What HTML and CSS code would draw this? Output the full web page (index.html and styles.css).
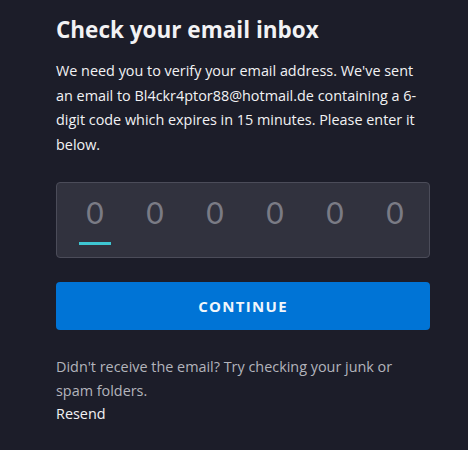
FILE: index.html
```html
<!DOCTYPE html>
<html lang="en">
<head>
    <meta charset="UTF-8">
    <meta name="viewport" content="width=device-width, initial-scale=1.0">
    <title>Check your email inbox</title>
    <link rel="stylesheet" href="styles.css">
</head>
<body>
<div id="container">
    <h1>Check your email inbox</h1>
    <p class="info">We need you to verify your email address. We've sent an email to Bl4ckr4ptor88@hotmail.de containing a 6-digit code which expires in 15 minutes. Please enter it below.</p>

    <div class="code">
        <div class="slot active"><span>0</span></div>
        <div class="slot"><span>0</span></div>
        <div class="slot"><span>0</span></div>
        <div class="slot"><span>0</span></div>
        <div class="slot"><span>0</span></div>
        <div class="slot"><span>0</span></div>
    </div>

    <button class="btn">CONTINUE</button>

    <p class="help">Didn't receive the email? Try checking your junk or spam folders.</p>
    <p class="resend">Resend</p>
</div>
</body>
</html>
```

FILE: styles.css
```css
* {
    padding: 0;
    margin: 0;
    box-sizing: border-box;
}
body {
    background: #1c1d29;
    font-family: "Open Sans", Lato, sans-serif;
    color: #f2f2f4;
}
#container {
    width: 374px;
    margin-left: 56px;
    padding-top: 14px;
}
h1 {
    font-size: 22.5px;
    font-weight: 700;
    line-height: 32px;
}
.info {
    margin-top: 13px;
    font-size: 14.4px;
    line-height: 24.5px;
}
.code {
    display: flex;
    margin-top: 25px;
    height: 76px;
    padding: 0 0 0 8px;
    background: #31323e;
    border: 1px solid #4b4c59;
    border-radius: 4px;
}
.slot {
    width: 60px;
    display: flex;
    flex-direction: column;
    align-items: center;
    padding-top: 10px;
}
.slot span {
    font-family: Lato, sans-serif;
    font-size: 30px;
    line-height: 38px;
    color: #7a7b85;
}
.slot.active::after {
    content: "";
    display: block;
    width: 32px;
    height: 3px;
    margin-top: 11px;
    background: #3ec6d2;
}
.btn {
    display: block;
    width: 100%;
    height: 48px;
    margin-top: 24px;
    border: 0;
    border-radius: 4px;
    background: #0074d6;
    color: #f2f6fb;
    font-family: "Open Sans", Lato, sans-serif;
    font-size: 15px;
    font-weight: 700;
    letter-spacing: 1.3px;
}
.help {
    margin-top: 25px;
    font-size: 14.4px;
    line-height: 24px;
    color: #b3b4bc;
}
.resend {
    font-size: 14.4px;
    line-height: 22px;
    color: #f2f2f4;
}
```
